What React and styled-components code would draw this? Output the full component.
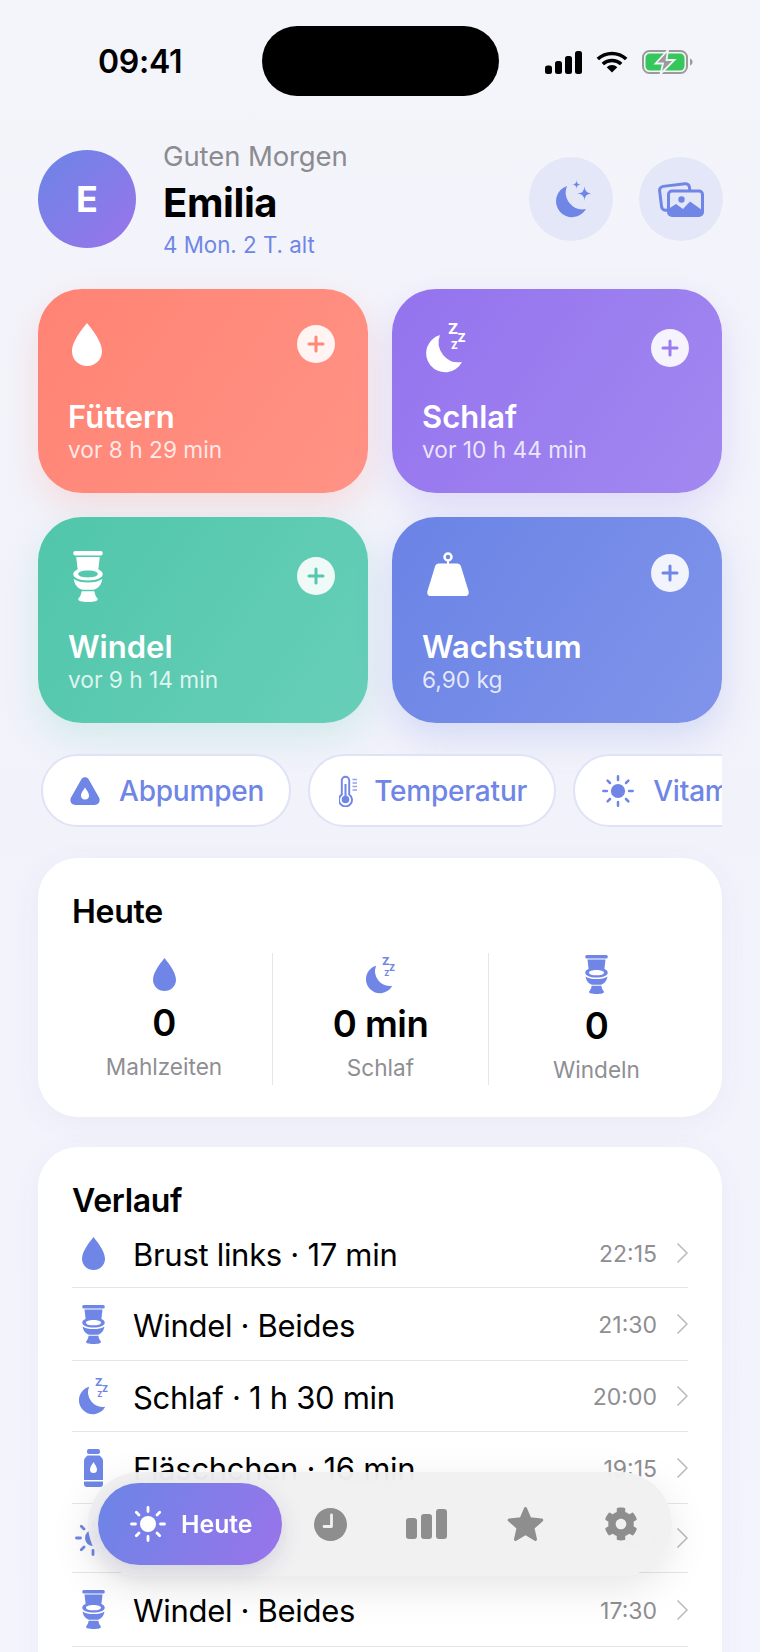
import React from "react";
import styled, { createGlobalStyle } from "styled-components";
import { FaCog } from "react-icons/fa";

const BLUE = "#6f86e6";

const Global = createGlobalStyle`
  html, body { margin: 0; padding: 0; background: #f3f3fb; }
  body { font-family: Inter, "Noto Sans", "Liberation Sans", sans-serif; -webkit-font-smoothing: antialiased; }
  * { box-sizing: border-box; }
`;

const Page = styled.div`
  position: relative; width: 760px; height: 1652px; overflow: hidden;
  padding: 26px 38px 0;
  background: linear-gradient(180deg, #f4f4fb 0%, #f1f2fa 50%, #f3f4fc 100%);
`;

/* status bar */
const StatusBar = styled.div`
  display: grid; grid-template-columns: 224px 237px 1fr; height: 70px; margin: 0 -38px 0 0; align-items: center;
`;
const Clock = styled.div`
  padding-left: 60px; font-size: 32px; font-weight: 600; color: #000; letter-spacing: -0.3px; line-height: 1; margin-top: 2px;
`;
const Island = styled.div`height: 70px; border-radius: 35px; background: #000;`;
const StatusIcons = styled.div`
  display: flex; align-items: center; gap: 14px; padding-left: 46px; margin-top: 2px;
`;

/* header */
const Header = styled.header`display: flex; align-items: center; height: 98px; margin-top: 54px;`;
const Avatar = styled.div`
  width: 98px; height: 98px; border-radius: 50%; flex: none; display: flex; align-items: center; justify-content: center;
  background: linear-gradient(135deg, #6b85e7 0%, #9a74ea 100%);
  color: #fff; font-size: 36px; font-weight: 700;
`;
const Greeting = styled.div`flex: 1; margin-left: 27px; display: flex; flex-direction: column;`;
const Hello = styled.div`font-size: 27.5px; line-height: 34px; color: #8b8b90; letter-spacing: -0.1px; margin-top: 1px;`;
const Name = styled.div`font-size: 40px; line-height: 50px; font-weight: 700; color: #000; margin-top: 5px; letter-spacing: -0.4px;`;
const Age = styled.div`font-size: 22.3px; line-height: 30px; color: ${BLUE}; margin-top: 2px;`;
const RoundButtons = styled.div`display: flex; gap: 26px; margin-right: -1px;`;
const RoundButton = styled.div`
  width: 84px; height: 84px; border-radius: 50%; background: #e4e7f7; display: flex; align-items: center; justify-content: center;
`;

/* action cards */
const CardGrid = styled.div`
  display: grid; grid-template-columns: 330px 330px; grid-template-rows: 204px 206px; gap: 24px; margin-top: 41px;
`;
const ActionCard = styled.div`
  border-radius: 44px; padding: 0 33px 28px 30px; display: flex; flex-direction: column; color: #fff;
  background: linear-gradient(125deg, ${p => p.$from}, ${p => p.$to});
  box-shadow: 0 14px 36px ${p => p.$glow};
`;
const CardTop = styled.div`display: flex; justify-content: space-between; align-items: flex-start;`;
const CardIcon = styled.div`margin: ${p => p.$top}px 0 0 ${p => p.$left}px; line-height: 0;`;
const PlusBadge = styled.div`
  width: 38px; height: 38px; border-radius: 50%; margin-top: ${p => p.$top}px; background: rgba(255,255,255,.9);
  display: flex; align-items: center; justify-content: center; color: ${p => p.$color};
`;
const CardText = styled.div`margin-top: auto;`;
const CardTitle = styled.div`font-size: 31px; line-height: 36px; font-weight: 600;`;
const CardSub = styled.div`font-size: 22.7px; line-height: 30px; color: rgba(255,255,255,.82);`;

/* chips */
const ChipRow = styled.div`
  display: flex; gap: 17px; margin: 31px 0 0; padding-left: 3px; height: 73px; overflow: hidden; width: 684px;
`;
const Chip = styled.div`
  flex: none; height: 73px; border-radius: 37px; background: #fff; border: 2px solid #dfe3f6;
  display: flex; align-items: center; gap: ${p => p.$gap}px; padding: 0 ${p => p.$right}px 0 ${p => p.$left}px;
  color: ${BLUE}; font-size: 28px; font-weight: 500; letter-spacing: -0.2px;
`;

/* panels */
const Panel = styled.section`
  background: #fff; border-radius: 40px; margin-top: ${p => p.$top}px; padding: 36px 34px 0;
  height: ${p => p.$h}px; box-shadow: 0 6px 30px rgba(90,100,160,.05);
`;
const PanelTitle = styled.h2`margin: 0; font-size: 32px; line-height: 36px; font-weight: 600; color: #000; letter-spacing: -0.3px;`;

const Stats = styled.div`display: grid; grid-template-columns: repeat(3, 216px); margin: 23px -16px 0 -16px; height: 130px;`;
const Stat = styled.div`
  display: flex; flex-direction: column; align-items: center; padding-top: ${p => p.$pad}px;
  border-left: ${p => (p.$divider ? "1.5px solid #e6e6ea" : "none")};
`;
const StatIcon = styled.div`height: ${p => p.$h}px; display: flex; align-items: center; justify-content: center;`;
const StatValue = styled.div`font-size: 36.5px; line-height: 44px; font-weight: 600; color: #000; margin-top: 10px; letter-spacing: -0.5px;`;
const StatLabel = styled.div`font-size: 22.6px; line-height: 30px; color: #8e8e93; margin-top: 7px;`;

const List = styled.div``;
const Row = styled.div`
  height: ${p => p.$h}px; display: flex; align-items: center; border-bottom: 1.5px solid #e6e6ea;
`;
const RowIcon = styled.div`width: 42px; flex: none; display: flex; justify-content: center; line-height: 0;`;
const RowText = styled.div`flex: 1; margin-left: 19px; font-size: 31px; color: #000; letter-spacing: -0.3px; margin-top: 2px;`;
const RowTime = styled.div`font-size: 23px; color: #8e8e93; margin-right: 20px; margin-top: 2px;`;

/* tab bar */
const TabBar = styled.nav`
  position: absolute; left: 88px; top: 1472px; width: 584px; height: 104px; border-radius: 52px;
  padding: 11px 3px 11px 10px; display: flex; align-items: center;
  background: rgba(240,240,241,.93); backdrop-filter: blur(16px);
  box-shadow: 0 12px 40px rgba(0,0,0,.1);
`;
const ActiveTab = styled.div`
  width: 184px; height: 82px; border-radius: 41px; flex: none; display: flex; align-items: center; gap: 15px; padding-left: 32px;
  background: linear-gradient(120deg, #6b85e7, #9a74ea); color: #fff; font-size: 24.8px; font-weight: 600;
  box-shadow: 0 8px 22px rgba(80,80,120,.18);
`;
const Tab = styled.div`flex: 1; display: flex; justify-content: center; color: #8e8e8e; line-height: 0; margin-left: ${p => p.$nudge || 0}px;`;

/* icons */
const Drop = ({ w, h, color = BLUE }) => (
  <svg width={w} height={h} viewBox="0 0 30 43"><path fill={color} d="M15 0C17 3 30 17 30 28.500A15 14.500 0 0 1 0 28.500C0 17 13 3 15 0Z" /></svg>
);
const Toilet = ({ w, h, color = BLUE }) => (
  <svg width={w} height={h} viewBox="0 0 30 52">
    <rect x="0" y="0" width="30" height="4.500" rx="2" fill={color} />
    <path fill={color} d="M3 6H27L25.500 19H4.500Z" />
    <path fill={color} fillRule="evenodd" d="M15 17C23.500 17 30 19.500 30 23.500S23.500 30 15 30S0 27.500 0 23.500S6.500 17 15 17ZM15 20C9 20 5 21.500 5 23.500S9 27 15 27S25 25.500 25 23.500S21 20 15 20Z" />
    <path fill={color} d="M0.500 28.500C4 31 9 32 15 32S26 31 29.500 28.500C29 34 25.500 38 21 39.500H9C4.500 38 1 34 0.500 28.500Z" />
    <path fill={color} d="M8.500 41H21.500C22 45 23.500 47 25 49C25 51 22 52 15 52S5 51 5 49C6.500 47 8 45 8.500 41Z" />
  </svg>
);
const MoonZ = ({ w, h, color = BLUE }) => (
  <svg width={w} height={h} viewBox="0 0 42 49" overflow="visible">
    <path fill={color} d="M15 12A19 19 0 1 0 37 39A20 20 0 0 1 15 12Z" />
    <g fill={color} fontFamily="Inter, sans-serif" fontWeight="800">
      <text x="23" y="11" fontSize="15">Z</text>
      <text x="32.500" y="19" fontSize="12">Z</text>
      <text x="26" y="26" fontSize="10">Z</text>
    </g>
  </svg>
);
const Weight = () => (
  <svg width="42" height="44" viewBox="0 0 42 44">
    <circle cx="21" cy="5" r="3.500" fill="none" stroke="#fff" strokeWidth="2.500" />
    <path fill="#fff" d="M20 9H22V11.500H30C32 11.500 33.500 12.500 34 14.500L41.500 39C42.300 42 41 44 38 44H4C1 44 -0.300 42 0.500 39L8 14.500C8.500 12.500 10 11.500 12 11.500H20Z" />
  </svg>
);
const Bottle = () => (
  <svg width="19" height="38" viewBox="0 0 19 38">
    <rect x="3" y="0" width="13" height="5" rx="2" fill={BLUE} />
    <path fill={BLUE} fillRule="evenodd" d="M3.500 6.500H15.500C17.500 8 19 9.500 19 12V31H0V12C0 9.500 1.500 8 3.500 6.500ZM9.500 13C8 15.500 6 18 6 20.500A3.500 3.500 0 0 0 13 20.500C13 18 11 15.500 9.500 13Z" />
    <path fill={BLUE} d="M0 32.500H19V35C19 37 18 38 16 38H3C1 38 0 37 0 35Z" />
  </svg>
);
const Sun = ({ size, color = BLUE, core = 8 }) => (
  <svg width={size} height={size} viewBox="0 0 36 36">
    <circle cx="18" cy="18" r={core} fill={color} />
    <g stroke={color} strokeWidth="2.800" strokeLinecap="round">
      <path d="M18 1.500V5.500M18 30.500V34.500M1.500 18H5.500M30.500 18H34.500M6.300 6.300L9 9M27 27L29.700 29.700M6.300 29.700L9 27M27 9L29.700 6.300" />
    </g>
  </svg>
);
const Plus = () => (
  <svg width="20" height="20" viewBox="0 0 20 20"><path d="M10 3V17M3 10H17" stroke="currentColor" strokeWidth="3" strokeLinecap="round" /></svg>
);
const Chevron = () => (
  <svg width="11" height="20" viewBox="0 0 11 20"><path d="M1 1L10 10L1 19" fill="none" stroke="#bdbdc2" strokeWidth="1.700" strokeLinecap="round" strokeLinejoin="round" /></svg>
);
const Signal = () => (
  <svg width="37" height="23" viewBox="0 0 37 23" fill="#000">
    <rect x="0" y="14.500" width="7" height="8.500" rx="2.500" />
    <rect x="10" y="10" width="7" height="13" rx="2.500" />
    <rect x="20" y="5" width="7" height="18" rx="2.500" />
    <rect x="30" y="0" width="7" height="23" rx="2.500" />
  </svg>
);
const Wifi = () => (
  <svg width="32" height="22" viewBox="0 0 32 21">
    <path d="M1.800 7.500A21 21 0 0 1 30.200 7.500M6.800 12.500A14 14 0 0 1 25.200 12.500" fill="none" stroke="#000" strokeWidth="3.600" />
    <path d="M16 21L10.700 15.700A7.500 7.500 0 0 1 21.300 15.700Z" fill="#000" />
  </svg>
);
const Battery = () => (
  <svg width="51" height="24" viewBox="0 0 51 24">
    <rect x="1" y="1" width="44" height="22" rx="6.500" fill="none" stroke="#9b9b9b" strokeWidth="2" />
    <rect x="3.500" y="3.500" width="39" height="17" rx="4.500" fill="#35c759" />
    <path d="M48 8.500C50 9.500 50.500 10.500 50.500 12S50 14.500 48 15.500Z" fill="#9b9b9b" />
    <path d="M26 0L13.500 13.500H21L18.500 24L32.500 10H24.500Z" fill="#9b9b9b" stroke="#f3f3fb" strokeWidth="1.800" />
  </svg>
);
const star = (cx, cy, r) =>
  `M${cx} ${cy - r}Q${cx} ${cy} ${cx + r} ${cy}Q${cx} ${cy} ${cx} ${cy + r}Q${cx} ${cy} ${cx - r} ${cy}Q${cx} ${cy} ${cx} ${cy - r}Z`;
const MoonStars = () => (
  <svg width="40" height="40" viewBox="0 0 40 40" fill={BLUE}>
    <path d="M16 7A16 16 0 1 0 35 30A17 17 0 0 1 16 7Z" />
    <path d={star(33.5, 14.5, 7.5)} />
    <path d={star(25.5, 5.5, 4.5)} />
  </svg>
);
const Photos = () => (
  <svg width="46" height="36" viewBox="0 0 46 36">
    <rect x="2.500" y="4" width="30" height="24" rx="4" fill="none" stroke={BLUE} strokeWidth="3" transform="rotate(-7 17 16)" />
    <rect x="10.500" y="10" width="34" height="24.500" rx="3.500" fill="#e4e7f7" stroke={BLUE} strokeWidth="3" />
    <circle cx="23.500" cy="18.500" r="3.200" fill={BLUE} />
    <path fill={BLUE} d="M11 34V27.500L18 23L25 28L32 20.500L44 29V34Z" />
  </svg>
);
const PumpIcon = () => (
  <svg width="30" height="28" viewBox="0 0 30 28">
    <path fillRule="evenodd" fill={BLUE} d="M11.500 2C13 -0.500 17 -0.500 18.500 2L29 20.500C30.700 23.800 29 28 24.500 28H5.500C1 28 -0.700 23.800 1 20.500ZM15 10.500C13.200 13.500 11 15.800 11 18.500A4 4 0 0 0 19 18.500C19 15.800 16.800 13.500 15 10.500Z" />
  </svg>
);
const Thermo = () => (
  <svg width="18" height="32" viewBox="0 0 18 32">
    <path d="M2.800 19.500V5.500A3.700 3.700 0 0 1 10.200 5.500V19.500A6.500 6.500 0 1 1 2.800 19.500Z" fill="none" stroke={BLUE} strokeWidth="1.900" />
    <circle cx="6.500" cy="24.500" r="3.800" fill={BLUE} />
    <rect x="5.500" y="9" width="2" height="14" fill={BLUE} />
    <path d="M13.500 4.500H18M13.500 8H18M13.500 11.500H18M13.500 15H18" stroke={BLUE} strokeWidth="1.400" opacity=".75" />
  </svg>
);
const ClockFill = () => (
  <svg width="33" height="33" viewBox="0 0 33 33">
    <circle cx="16.500" cy="16.500" r="16.500" fill="#8e8e8e" />
    <path d="M17.500 7V18.500H10" fill="none" stroke="#f0f0f1" strokeWidth="2.800" strokeLinecap="round" strokeLinejoin="round" />
  </svg>
);
const Bars = () => (
  <svg width="41" height="30" viewBox="0 0 41 30" fill="#8e8e8e">
    <rect x="0" y="9" width="11" height="21" rx="3" />
    <rect x="15" y="5" width="11" height="25" rx="3" />
    <rect x="30" y="0" width="11" height="30" rx="3" />
  </svg>
);
const StarFill = () => (
  <svg width="37" height="36" viewBox="0 0 36 34">
    <path d="M18 2L22.300 12L33.800 13.200L25.200 20.800L27.700 32L18 26.200L8.300 32L10.800 20.800L2.200 13.200L13.700 12Z" fill="#8e8e8e" stroke="#8e8e8e" strokeWidth="3" strokeLinejoin="round" />
  </svg>
);

const cards = [
  { title: "Füttern", sub: "vor 8 h 29 min", from: "#ff8374", to: "#ff9385", glow: "rgba(255,130,115,.2)", plus: "#ff8878", plusTop: 36, top: 34, left: 4, icon: <Drop w={30} h={43} color="#fff" /> },
  { title: "Schlaf", sub: "vor 10 h 44 min", from: "#9473ee", to: "#a288f0", glow: "rgba(150,120,240,.2)", plus: "#9a7cee", plusTop: 40, top: 34, left: 3, icon: <MoonZ w={42} h={49} color="#fff" /> },
  { title: "Windel", sub: "vor 9 h 14 min", from: "#50c6aa", to: "#68cfb9", glow: "rgba(85,200,175,.2)", plus: "#55c8ae", plusTop: 40, top: 34, left: 5, icon: <Toilet w={30} h={51} color="#fff" /> },
  { title: "Wachstum", sub: "6,90 kg", from: "#6a83e5", to: "#8094ea", glow: "rgba(110,130,230,.22)", plus: "#6f86e6", plusTop: 37, top: 35, left: 5, icon: <Weight /> },
];

const rows = [
  { h: 69, text: "Brust links · 17 min", time: "22:15", icon: <Drop w={23} h={33} /> },
  { h: 73, text: "Windel · Beides", time: "21:30", icon: <Toilet w={23} h={39} /> },
  { h: 71, text: "Schlaf · 1 h 30 min", time: "20:00", icon: <MoonZ w={31} h={36} /> },
  { h: 72, text: "Fläschchen · 16 min", time: "19:15", icon: <Bottle /> },
  { h: 69, text: "Vitamin D", time: "18:30", icon: <Sun size={36} /> },
  { h: 74, text: "Windel · Beides", time: "17:30", icon: <Toilet w={23} h={39} /> },
];

export default function App() {
  return (
    <Page>
      <Global />
      <StatusBar>
        <Clock>09:41</Clock>
        <Island />
        <StatusIcons>
          <Signal />
          <Wifi />
          <Battery />
        </StatusIcons>
      </StatusBar>

      <Header>
        <Avatar>E</Avatar>
        <Greeting>
          <Hello>Guten Morgen</Hello>
          <Name>Emilia</Name>
          <Age>4 Mon. 2 T. alt</Age>
        </Greeting>
        <RoundButtons>
          <RoundButton><MoonStars /></RoundButton>
          <RoundButton><Photos /></RoundButton>
        </RoundButtons>
      </Header>

      <CardGrid>
        {cards.map(c => (
          <ActionCard key={c.title} $from={c.from} $to={c.to} $glow={c.glow}>
            <CardTop>
              <CardIcon $top={c.top} $left={c.left}>{c.icon}</CardIcon>
              <PlusBadge $top={c.plusTop} $color={c.plus}><Plus /></PlusBadge>
            </CardTop>
            <CardText>
              <CardTitle>{c.title}</CardTitle>
              <CardSub>{c.sub}</CardSub>
            </CardText>
          </ActionCard>
        ))}
      </CardGrid>

      <ChipRow>
        <Chip $left={27} $gap={19} $right={25}><PumpIcon />Abpumpen</Chip>
        <Chip $left={29} $gap={17} $right={27}><Thermo />Temperatur</Chip>
        <Chip $left={27} $gap={19} $right={26}><Sun size={32} />Vitamin D</Chip>
      </ChipRow>

      <Panel $top={31} $h={259}>
        <PanelTitle>Heute</PanelTitle>
        <Stats>
          <Stat $pad={5}>
            <StatIcon $h={33}><Drop w={23} h={33} /></StatIcon>
            <StatValue>0</StatValue>
            <StatLabel>Mahlzeiten</StatLabel>
          </Stat>
          <Stat $pad={4} $divider>
            <StatIcon $h={35}><MoonZ w={31} h={36} /></StatIcon>
            <StatValue>0 min</StatValue>
            <StatLabel>Schlaf</StatLabel>
          </Stat>
          <Stat $pad={2} $divider>
            <StatIcon $h={39}><Toilet w={23} h={39} /></StatIcon>
            <StatValue>0</StatValue>
            <StatLabel>Windeln</StatLabel>
          </Stat>
        </Stats>
      </Panel>

      <Panel $top={30} $h={560}>
        <PanelTitle>Verlauf</PanelTitle>
        <List>
          {rows.map(r => (
            <Row key={r.time} $h={r.h}>
              <RowIcon>{r.icon}</RowIcon>
              <RowText>{r.text}</RowText>
              <RowTime>{r.time}</RowTime>
              <Chevron />
            </Row>
          ))}
        </List>
      </Panel>

      <TabBar>
        <ActiveTab><Sun size={36} color="#fff" />Heute</ActiveTab>
        <Tab><ClockFill /></Tab>
        <Tab><Bars /></Tab>
        <Tab $nudge={3}><StarFill /></Tab>
        <Tab><FaCog size={34} /></Tab>
      </TabBar>
    </Page>
  );
}
